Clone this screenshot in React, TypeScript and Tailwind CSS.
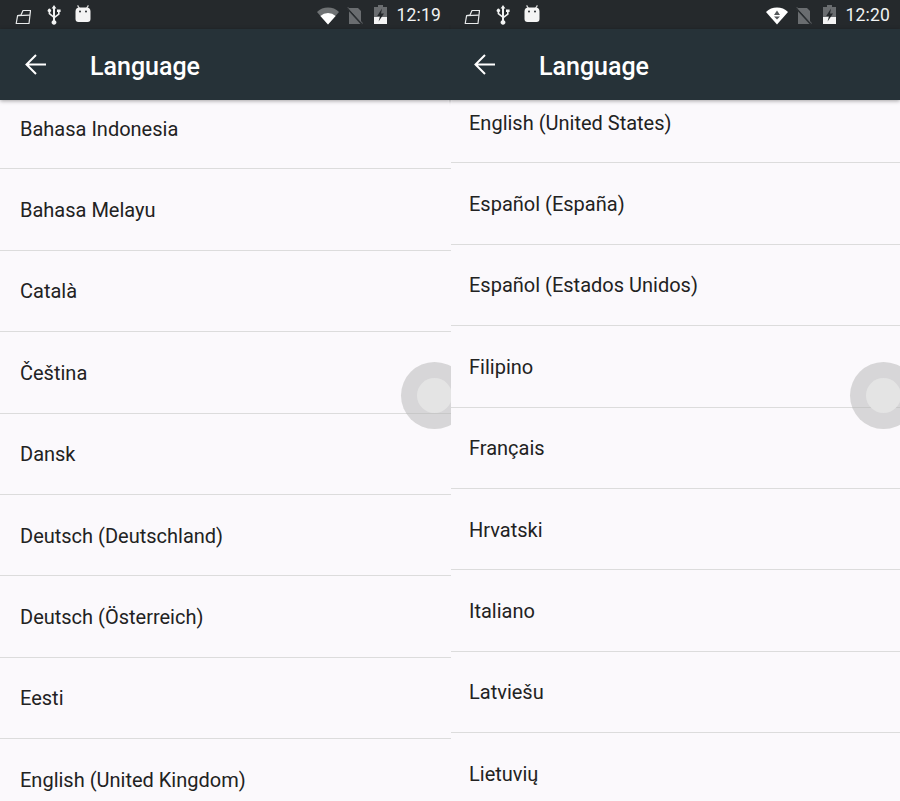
function BagIcon() {
  return (
    <svg width="16" height="18" viewBox="0 0 16 18" fill="none" stroke="#e8eaeb" strokeWidth="1.2" strokeLinejoin="round">
      <path d="M8 4.5 L15.5 4.5 L14 17.5 L1.2 17.5 L2.6 9.6 L6 9 Z" />
      <path d="M2.6 9.6 L14.9 9.2" />
    </svg>
  );
}

function UsbIcon() {
  return (
    <svg width="14" height="20" viewBox="0 0 14 20" fill="#f2f3f3">
      <path d="M7 0 L9.4 3.6 H8 V11 L11 8.8 V7 H10 V4.4 H13.6 V7 H12.6 V9.6 L8 13 V15.2 A2.4 2.4 0 1 1 6 15.2 V12.4 L1.6 9 V7 A1.7 1.7 0 1 1 3.2 7 V8.2 L6 10.4 V3.6 H4.6 Z" />
    </svg>
  );
}

function AndroidIcon() {
  return (
    <svg width="16" height="18" viewBox="0 0 16 18">
      <path d="M2.6 0.4 L4.4 3.4 M13.4 0.4 L11.6 3.4" stroke="#d8d9da" strokeWidth="1.2" />
      <path d="M0.5 6.5 A4 4 0 0 1 4.5 2.5 H11.5 A4 4 0 0 1 15.5 6.5 V14 A3 3 0 0 1 12.5 17 H3.5 A3 3 0 0 1 0.5 14 Z" fill="#f4f4f4" />
      <circle cx="5" cy="6.5" r="1" fill="#2a2e31" />
      <circle cx="11" cy="6.5" r="1" fill="#2a2e31" />
    </svg>
  );
}

function WifiIcon({ data }: { data: boolean }) {
  return (
    <svg width="22" height="18" viewBox="0 0 22 18">
      {data ? (
        <>
          <path d="M0 5 A16 16 0 0 1 22 5 L11 17.5 Z" fill="#ffffff" />
          <path d="M11 3.5 L14 8 H8 Z" fill="#53575a" />
          <path d="M8 9.5 H14 L11 12.5 Z" fill="#53575a" />
        </>
      ) : (
        <>
          <path d="M0 5 A16 16 0 0 1 22 5 L11 17.5 Z" fill="#6f7274" />
          <path d="M3.4 9 A11 11 0 0 1 18.6 9 L11 17.5 Z" fill="#ffffff" />
        </>
      )}
    </svg>
  );
}

function NoSimIcon() {
  return (
    <svg width="16" height="18" viewBox="0 0 16 18">
      <path d="M2 1 H11 L14 4 V17 H2 Z" fill="#6a6d70" />
      <path d="M0.4 1.4 L15.2 17.6" stroke="#2a2e31" strokeWidth="1.8" />
      <path d="M0.8 0.2 L15.8 16.6" stroke="#6a6d70" strokeWidth="0.9" />
    </svg>
  );
}

function BatteryIcon() {
  return (
    <svg width="13" height="19" viewBox="0 0 13 19">
      <path d="M4 0 H9 V2 H13 V19 H0 V2 H4 Z" fill="#6a6d70" />
      <path d="M0 12 H13 V19 H0 Z" fill="#f4f4f4" />
      <path d="M8 3.5 L3.2 11 H6 L4.6 16.5 L10 8.5 H7 Z" fill="#24282b" />
    </svg>
  );
}

function Panel({ time, wifiData, firstShift, className, items }: { time: string; wifiData: boolean; firstShift: string; className: string; items: string[] }) {
  return (
    <div className={`relative w-[451px] h-full shrink-0 overflow-hidden flex flex-col bg-[#fbf9fc] ${className}`}>
      {/* status bar */}
      <div className="h-[29px] shrink-0 bg-[#25292c] flex items-center pl-[15px] pr-[10px] text-[#f1f2f2]">
        <BagIcon />
        <div className="ml-[16px]"><UsbIcon /></div>
        <div className="ml-[14px] -mt-[2px]"><AndroidIcon /></div>
        <div className="ml-auto mt-[2px]"><WifiIcon data={wifiData} /></div>
        <div className="ml-[8px] mt-[2px]"><NoSimIcon /></div>
        <div className="ml-[11px]"><BatteryIcon /></div>
        <span className="ml-[9px] text-[17.5px] leading-none tracking-[0.2px] mt-[2px]">{time}</span>
      </div>
      {/* app bar */}
      <div className="relative z-10 h-[71px] shrink-0 bg-[#263238] flex items-center pl-[25px] shadow-[0_1px_4px_rgba(0,0,0,0.35)]">
        <svg width="21" height="21" viewBox="0 0 21 21" fill="none" stroke="#ffffff" strokeWidth="2">
          <path d="M21 10.5 H2 M11 1 L1.5 10.5 L11 20" />
        </svg>
        <span className="ml-[44px] text-[25px] font-medium text-white leading-none mt-[3px]">Language</span>
      </div>
      {/* list */}
      <div className="flex-1 overflow-hidden">
        <div className={firstShift}>
          {items.map((item) => (
            <div key={item} className="h-[81.4px] flex items-center pl-[20px] pt-[1px] border-b border-[#dcdcdc] text-[20px] text-[#222222]">
              {item}
            </div>
          ))}
        </div>
      </div>
      {/* floating touch button */}
      <div className="absolute left-[401px] top-[362px] w-[67px] h-[67px] rounded-full bg-[#b4b4b4]/50 flex items-center justify-center">
        <div className="w-[35px] h-[35px] rounded-full bg-[#e4e4e4]" />
      </div>
    </div>
  );
}

export default function App() {
  const left = ['Bahasa Indonesia', 'Bahasa Melayu', 'Català', 'Čeština', 'Dansk', 'Deutsch (Deutschland)', 'Deutsch (Österreich)', 'Eesti', 'English (United Kingdom)'];
  const right = ['English (United States)', 'Español (España)', 'Español (Estados Unidos)', 'Filipino', 'Français', 'Hrvatski', 'Italiano', 'Latviešu', 'Lietuvių'];
  return (
    <div className="w-[900px] h-[801px] flex overflow-hidden font-['Roboto',sans-serif]">
      <Panel time="12:19" wifiData={false} firstShift="-mt-[12px]" className="z-10" items={left} />
      <Panel time="12:20" wifiData={true} firstShift="-mt-[18px]" className="-ml-[2px]" items={right} />
    </div>
  );
}
